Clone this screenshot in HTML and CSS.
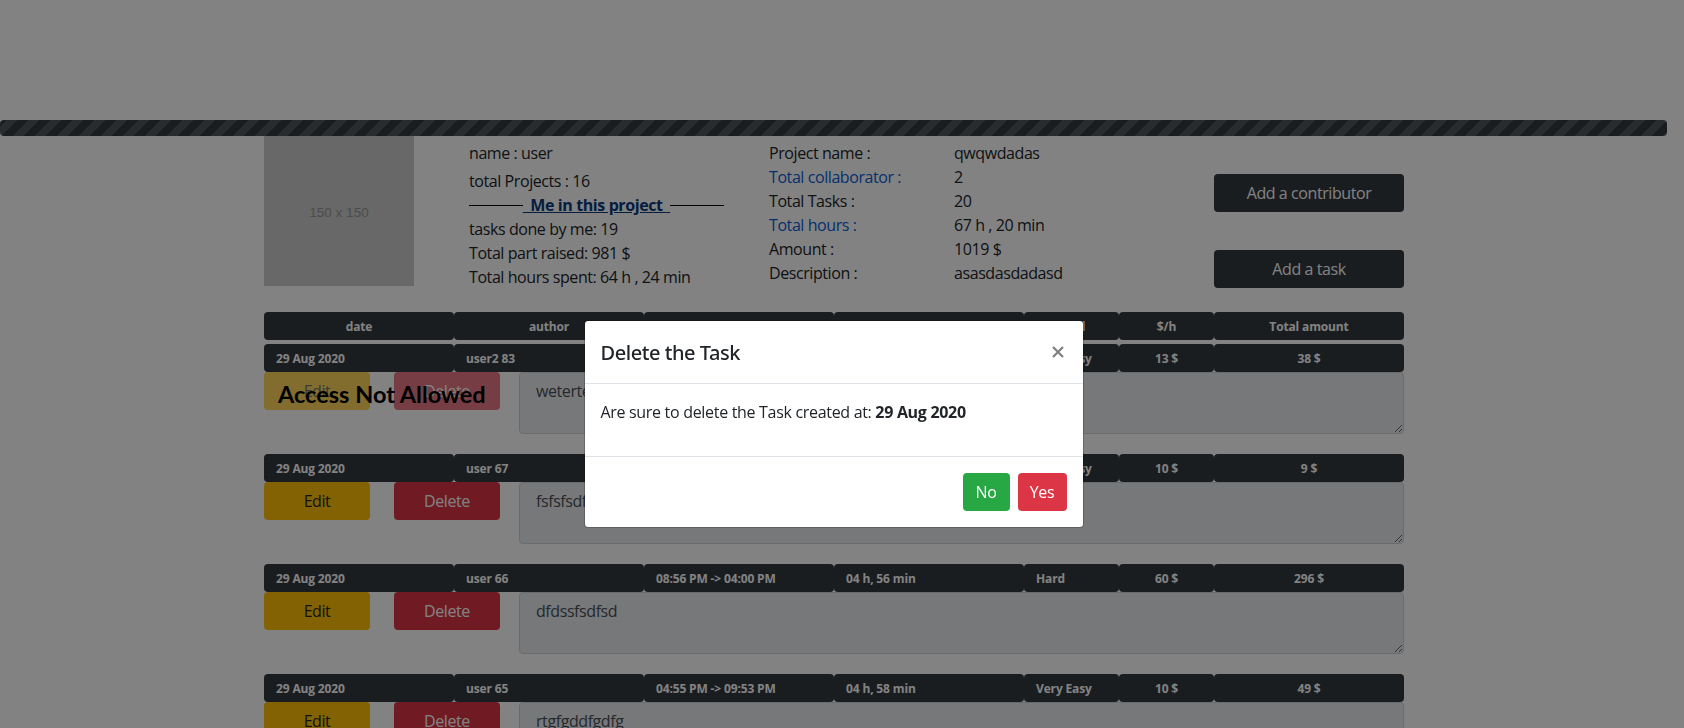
FILE: index.html
```html
<!DOCTYPE html>
<html lang="en">
<head>
    <title>Project tasks</title>
    <link rel="stylesheet" href="styles.css">
</head>
<body>
    <div class="page">
        <div class="progress-bar"></div>
        <div class="container">
            <div class="summary">
                <div class="avatar">150 x 150</div>
                <div class="me">
                    <div class="me-name">name : user</div>
                    <div>total Projects : 16</div>
                    <div class="me-title"><span class="rule"></span><span class="me-link">&nbsp;&nbsp;Me in this project&nbsp;&nbsp;</span><span class="rule"></span></div>
                    <div>tasks done by me: 19</div>
                    <div>Total part raised: 981 $</div>
                    <div>Total hours spent: 64 h , 24 min</div>
                </div>
                <div class="project">
                    <div>Project name :</div><div>qwqwdadas</div>
                    <div class="blue">Total collaborator :</div><div>2</div>
                    <div>Total Tasks :</div><div>20</div>
                    <div class="blue">Total hours :</div><div>67 h , 20 min</div>
                    <div>Amount :</div><div>1019 $</div>
                    <div>Description :</div><div>asasdasdadasd</div>
                </div>
                <div class="actions">
                    <button class="btn btn-dark">Add a contributor</button>
                    <button class="btn btn-dark">Add a task</button>
                </div>
            </div>

            <div class="cells cells-head">
                <div>date</div><div>author</div><div>time</div><div>duration</div><div>level</div><div>$/h</div><div>Total amount</div>
            </div>

            <div class="task">
                <div class="cells">
                    <div>29 Aug 2020</div><div>user2 83</div><div>10:40 AM -&gt; 01:36 PM</div><div>02 h, 56 min</div><div>Very Easy</div><div class="mid">13 $</div><div class="mid">38 $</div>
                </div>
                <div class="task-body">
                    <div class="task-btns locked">
                        <button class="btn btn-edit">Edit</button>
                        <button class="btn btn-delete">Delete</button>
                        <div class="not-allowed">Access Not Allowed</div>
                    </div>
                    <textarea class="task-text" disabled>weterterte</textarea>
                </div>
            </div>

            <div class="task">
                <div class="cells">
                    <div>29 Aug 2020</div><div>user 67</div><div>07:12 PM -&gt; 08:06 PM</div><div>00 h, 54 min</div><div>Very Easy</div><div class="mid">10 $</div><div class="mid">9 $</div>
                </div>
                <div class="task-body">
                    <div class="task-btns">
                        <button class="btn btn-edit">Edit</button>
                        <button class="btn btn-delete">Delete</button>
                    </div>
                    <textarea class="task-text" disabled>fsfsfsdfsdf</textarea>
                </div>
            </div>

            <div class="task">
                <div class="cells">
                    <div>29 Aug 2020</div><div>user 66</div><div>08:56 PM -&gt; 04:00 PM</div><div>04 h, 56 min</div><div>Hard</div><div class="mid">60 $</div><div class="mid">296 $</div>
                </div>
                <div class="task-body">
                    <div class="task-btns">
                        <button class="btn btn-edit">Edit</button>
                        <button class="btn btn-delete">Delete</button>
                    </div>
                    <textarea class="task-text" disabled>dfdssfsdfsd</textarea>
                </div>
            </div>

            <div class="task">
                <div class="cells">
                    <div>29 Aug 2020</div><div>user 65</div><div>04:55 PM -&gt; 09:53 PM</div><div>04 h, 58 min</div><div>Very Easy</div><div class="mid">10 $</div><div class="mid">49 $</div>
                </div>
                <div class="task-body">
                    <div class="task-btns">
                        <button class="btn btn-edit">Edit</button>
                        <button class="btn btn-delete">Delete</button>
                    </div>
                    <textarea class="task-text" disabled>rtgfgddfgdfg</textarea>
                </div>
            </div>
        </div>
    </div>

    <div class="backdrop"></div>
    <div class="modal">
        <div class="modal-box">
            <div class="modal-head">
                <div class="modal-title">Delete the Task</div>
                <svg class="modal-close" width="12" height="12" viewBox="0 0 12 12"><path d="M1 1L11 11M11 1L1 11" stroke="#000" stroke-width="2.2" fill="none"/></svg>
            </div>
            <div class="modal-body">Are sure to delete the Task created at: <b>29 Aug 2020</b></div>
            <div class="modal-foot">
                <button class="btn btn-no">No</button>
                <button class="btn btn-yes">Yes</button>
            </div>
        </div>
    </div>
</body>
</html>
```

FILE: styles.css
```css
* {
    box-sizing: border-box;
}
html, body {
    height: 100%;
    overflow: hidden;
}
body {
    margin: 0;
    background: #fff;
    color: #212529;
    font-family: "Open Sans", "Noto Sans", sans-serif;
    font-size: 16px;
    line-height: 24px;
    letter-spacing: -.42px;
}
.page {
    width: calc(100% - 17px);
    padding-top: 120px;
}
.progress-bar {
    height: 16px;
    border-radius: 4px;
    background-color: #343a40;
    background-image: linear-gradient(45deg, rgba(255,255,255,.15) 25%, transparent 25%, transparent 50%, rgba(255,255,255,.15) 50%, rgba(255,255,255,.15) 75%, transparent 75%, transparent);
    background-size: 22px 22px;
    transform: scaleX(-1);
}
.container {
    width: 1140px;
    margin: 0 auto;
    position: relative;
    left: 0.5px;
}

/* top part */
.summary {
    display: flex;
    height: 176px;
}
.avatar {
    width: 150px;
    height: 150px;
    margin-right: 55px;
    padding-top: 3px;
    background: #ccc;
    color: #969696;
    font-family: "Liberation Sans", sans-serif;
    font-size: 13.5px;
    letter-spacing: 0;
    display: flex;
    align-items: center;
    justify-content: center;
}
.me {
    width: 255px;
    margin-right: 45px;
    padding-top: 5px;
}
.me-name {
    margin-bottom: 4px;
}
.me-title {
    display: flex;
    align-items: center;
}
.rule {
    flex: 1;
    height: 1px;
    background: #000;
}
.me-link {
    color: #0a3a7a;
    font-weight: 700;
    font-size: 16px;
    letter-spacing: -.4px;
    text-decoration: underline;
}
.project {
    width: 445px;
    padding-top: 5px;
    display: grid;
    grid-template-columns: 185px 1fr;
    grid-auto-rows: 24px;
}
.blue {
    color: #0b5ed7;
}
.actions {
    width: 190px;
    padding-top: 38px;
    display: flex;
    flex-direction: column;
    gap: 38px;
}

/* buttons */
.btn {
    height: 38px;
    padding: 0 12px;
    border: none;
    border-radius: 4px;
    font-family: inherit;
    font-size: 16px;
    letter-spacing: inherit;
}
.btn-dark {
    width: 100%;
    background: #343a40;
    color: #fff;
}
.btn-edit {
    width: 106px;
    background: #ffc107;
    color: #212529;
}
.btn-delete {
    width: 106px;
    background: #dc3545;
    color: #fff;
}
.btn-no {
    width: 47px;
    background: #28a745;
    color: #fff;
}
.btn-yes {
    width: 49px;
    background: #dc3545;
    color: #fff;
}

/* tasks */
.cells {
    display: grid;
    grid-template-columns: 2fr 2fr 2fr 2fr 1fr 1fr 2fr;
    font-size: 12px;
    font-weight: 700;
    line-height: 28px;
    letter-spacing: -.15px;
    color: #fff;
}
.cells > div {
    height: 28px;
    padding: 1px 12px 0;
    background: #343a40;
    border-radius: 4px;
}
.cells-head {
    margin-bottom: 4px;
    text-align: center;
}
.mid {
    text-align: center;
}
.task {
    margin-bottom: 20px;
}
.task-body {
    display: flex;
}
.task-btns {
    width: 255px;
    display: flex;
    gap: 24px;
    align-items: flex-start;
    position: relative;
}
.locked .btn {
    opacity: .65;
}
.not-allowed {
    position: absolute;
    left: 14px;
    top: 8px;
    color: #000;
    font-family: "Comic Sans MS", Lato, sans-serif;
    font-size: 23.5px;
    font-weight: 700;
    line-height: 28px;
    letter-spacing: 0;
    white-space: nowrap;
}
.task-text {
    flex: 1;
    height: 62px;
    padding: 6px 16px;
    background: #e9ecef;
    border: 1px solid #ced4da;
    border-radius: 4px;
    color: #495057;
    font-family: inherit;
    font-size: 16px;
    line-height: 24px;
    letter-spacing: inherit;
}

/* delete dialog */
.backdrop {
    position: fixed;
    inset: 0;
    background: rgba(0,0,0,.49);
}
.modal {
    position: fixed;
    inset: 0;
    padding: 320px 17px 0 0;
    display: flex;
    justify-content: center;
    align-items: flex-start;
    letter-spacing: -.31px;
}
.modal-box {
    width: 500px;
    background: #fff;
    background-clip: padding-box;
    border: 1px solid rgba(0,0,0,.2);
    border-radius: 4px;
}
.modal-head {
    height: 63px;
    padding: 16px;
    border-bottom: 1px solid #dee2e6;
    display: flex;
    justify-content: space-between;
    align-items: center;
}
.modal-title {
    padding-top: 1px;
    font-family: "Noto Sans", sans-serif;
    font-size: 20px;
    font-weight: 500;
    line-height: 30px;
    letter-spacing: -.45px;
}
.modal-close {
    margin-right: 3px;
    opacity: .5;
}
.modal-body {
    height: 72px;
    padding: 16px;
}
.modal-foot {
    height: 71px;
    padding: 16px;
    border-top: 1px solid #dee2e6;
    display: flex;
    justify-content: flex-end;
    gap: 8px;
}
```
